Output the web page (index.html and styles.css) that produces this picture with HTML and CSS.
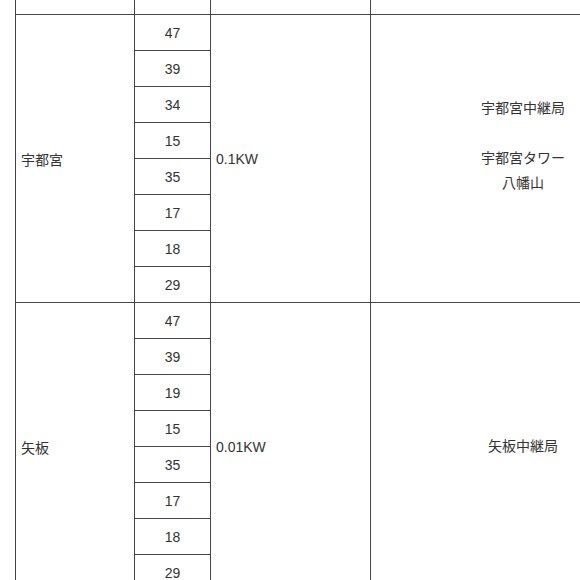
FILE: index.html
```html
<!DOCTYPE html>
<html lang="ja">
<head>
<meta charset="utf-8">
<link rel="stylesheet" href="styles.css">
</head>
<body>
<div class="viewport">
<table class="ch-table">
  <colgroup>
    <col class="c-area"><col class="c-ch"><col class="c-pow"><col class="c-st">
  </colgroup>
  <tr class="prev"><td></td><td></td><td></td><td></td></tr>
  <tr>
    <td class="area" rowspan="8">宇都宮</td>
    <td class="ch">47</td>
    <td class="pow" rowspan="8">0.1KW</td>
    <td class="st" rowspan="8"><div class="st-lines"><span>宇都宮中継局</span><span>&nbsp;</span><span>宇都宮タワー</span><span>八幡山</span><span>&nbsp;</span></div></td>
  </tr>
  <tr><td class="ch">39</td></tr>
  <tr><td class="ch">34</td></tr>
  <tr><td class="ch">15</td></tr>
  <tr><td class="ch">35</td></tr>
  <tr><td class="ch">17</td></tr>
  <tr><td class="ch">18</td></tr>
  <tr><td class="ch">29</td></tr>
  <tr>
    <td class="area" rowspan="8">矢板</td>
    <td class="ch">47</td>
    <td class="pow" rowspan="8">0.01KW</td>
    <td class="st" rowspan="8"><div class="st-lines"><span>矢板中継局</span></div></td>
  </tr>
  <tr><td class="ch">39</td></tr>
  <tr><td class="ch">19</td></tr>
  <tr><td class="ch">15</td></tr>
  <tr><td class="ch">35</td></tr>
  <tr><td class="ch">17</td></tr>
  <tr><td class="ch">18</td></tr>
  <tr><td class="ch">29</td></tr>
</table>
</div>
</body>
</html>
```
FILE: styles.css
```css
html, body {
  margin: 0;
  padding: 0;
  background: #fff;
}
.viewport {
  width: 580px;
  height: 580px;
  overflow: hidden;
}
.ch-table {
  border-collapse: collapse;
  table-layout: fixed;
  width: 660px;
  margin-left: 15px;
  margin-top: -21px;
  font-family: "Liberation Sans", Arial, "Noto Sans CJK JP", sans-serif;
  font-size: 14px;
  color: #333;
}
.c-area { width: 119px; }
.c-ch { width: 76px; }
.c-pow { width: 160px; }
.c-st { width: 305px; }
.ch-table td {
  border: 1px solid #444;
  padding: 0 5px;
  vertical-align: middle;
}
.prev td {
  height: 34px;
}
.ch-table td.ch {
  height: 35px;
  text-align: center;
  padding: 0;
}
.st {
  text-align: center;
}
.st-lines {
  display: flex;
  flex-direction: column;
  line-height: 25px;
}
```
